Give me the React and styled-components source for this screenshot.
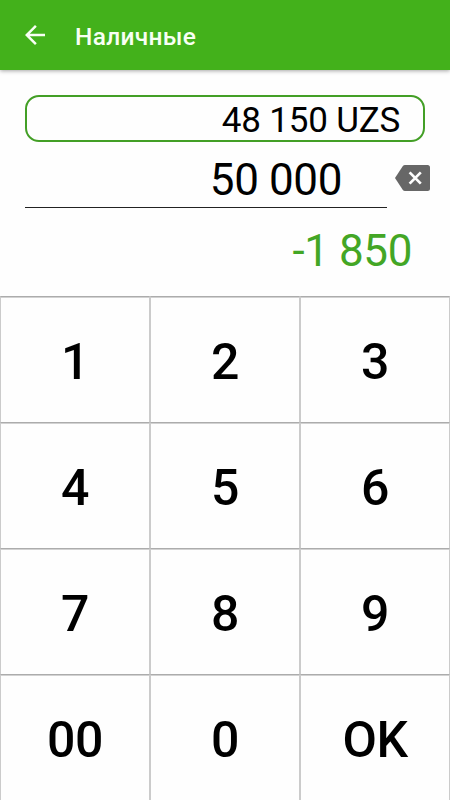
import styled, { createGlobalStyle } from "styled-components";
import { MdArrowBack } from "react-icons/md";

const GlobalStyle = createGlobalStyle`
    *{
        box-sizing: border-box;
    }

    body{
        margin: 0;
        background: #fefefe;
        font-family: Roboto, sans-serif;
        color: #000;
    }

    button{
        padding: 0;
        border: none;
        background: none;
        font-family: inherit;
        color: inherit;
        cursor: pointer;
    }
`

const Screen = styled.div`
    width: 100%;
    height: 100vh;
    overflow: hidden;

    display: flex;
    flex-direction: column;
`

const Header = styled.header`
    flex: none;
    height: 70px;
    padding: 0 20px;

    display: flex;
    align-items: center;
    gap: 25px;

    background: #43b11b;
    box-shadow: 0 1px 4px rgba(0, 0, 0, 0.35);
    color: #f8fff4;
`

const IconButton = styled.button`
    flex: none;
    display: flex;

    svg{
        width: ${({ $width }) => $width}px;
        height: ${({ $height }) => $height}px;
    }
`

const Title = styled.h1`
    margin: 0;
    padding-top: 3px;
    font-size: 24.5px;
    font-weight: 500;
    letter-spacing: 0.3px;
    line-height: 30px;
`

const Summary = styled.section`
    flex: none;
    height: 226px;
    padding: 25px 25px 0;
`

const Total = styled.div`
    height: 47px;
    padding: 2px 23px 0 0;
    border: 2px solid #439f26;
    border-radius: 14px;

    font-size: 35px;
    letter-spacing: -0.2px;
    line-height: 43px;
    text-align: right;
`

const AmountRow = styled.div`
    height: 66px;
    margin-right: -5px;

    display: flex;
    justify-content: space-between;
`

const Amount = styled.div`
    width: 362px;
    padding: 8px 45px 0 0;
    border-bottom: 1px solid #222;

    font-size: 44px;
    letter-spacing: -0.4px;
    line-height: 60px;
    text-align: right;
`

const EraseSlot = styled.div`
    padding-top: 23px;
`

const Change = styled.div`
    padding: 13px 13px 0 0;

    font-size: 44px;
    letter-spacing: -0.4px;
    line-height: 60px;
    text-align: right;
    color: #43a625;
`

const Keypad = styled.div`
    flex: none;
    display: grid;
    grid-template-columns: repeat(3, 1fr);
    grid-auto-rows: 126px;
`

const Key = styled.button`
    && {
        padding-top: 5px;
        border: 1px solid #cbcbcb;
        border-top-color: #acacac;
        border-bottom: none;
    }

    box-shadow: inset 0 1px #d2d2d2;
    font-size: 50px;
    font-weight: 500;
    letter-spacing: -0.4px;
`

const keys = ["1", "2", "3", "4", "5", "6", "7", "8", "9", "00", "0", "OK"];

function BackspaceIcon(){
    return(
        <svg viewBox="0 0 35 26">
            <path
                d="M10 0H32.5Q35 0 35 2.5V23.5Q35 26 32.5 26H10Q8.6 26 7.7 24.8L0 13L7.7 1.2Q8.6 0 10 0Z"
                fill="#676767"
            />
            <path d="M14.6 7.4L25.8 18.6M25.8 7.4L14.6 18.6" stroke="#fff" strokeWidth="2.7" />
        </svg>
    );
}

export default function App(){
    return(
        <Screen>
            <GlobalStyle />

            <Header>
                <IconButton $width={30} $height={30} aria-label="Назад">
                    <MdArrowBack />
                </IconButton>
                <Title>Наличные</Title>
            </Header>

            <Summary>
                <Total>48 150 UZS</Total>
                <AmountRow>
                    <Amount>50 000</Amount>
                    <EraseSlot>
                        <IconButton $width={35} $height={26} aria-label="Стереть">
                            <BackspaceIcon />
                        </IconButton>
                    </EraseSlot>
                </AmountRow>
                <Change>-1 850</Change>
            </Summary>

            <Keypad>
                {keys.map((key) => (
                    <Key key={key}>{key}</Key>
                ))}
            </Keypad>
        </Screen>
    );
}
